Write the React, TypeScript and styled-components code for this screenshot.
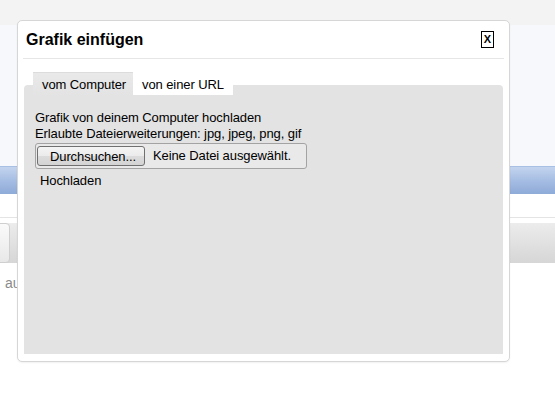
import React from 'react';
import styled, { createGlobalStyle } from 'styled-components';

const GlobalStyle = createGlobalStyle`
	html, body {
		margin: 0;
		padding: 0;
		background: #fff;
		font-family: 'Liberation Sans', Arial, sans-serif;
		font-size: 13px;
		color: #000;
	}
`;

const Page = styled.div`
	position: relative;
	width: 555px;
	height: 401px;
	overflow: hidden;
	background: #fff;
`;

const TopBand = styled.div`
	height: 25px;
	background: #f3f3f3;
`;

const Hero = styled.div`
	height: 141px;
	background: #f7f8fc;
`;

const BlueBar = styled.div`
	height: 28px;
	background: linear-gradient(#c3d4ee, #a3bbe2 55%, #8eaad8);
	border-top: 1px solid #a9bfe3;
	box-sizing: border-box;
`;

const Spacer = styled.div`
	height: 23px;
	border-bottom: 1px solid #e4e4e4;
`;

const Toolbar = styled.div`
	margin-top: 5px;
	height: 40px;
	display: flex;
	align-items: center;
	background: linear-gradient(#ececec, #d6d6d6);
`;

const ToolButton = styled.div`
	width: 30px;
	height: 38px;
	margin-left: -22px;
	border: 1px solid #cfcfcf;
	border-radius: 4px;
	background: linear-gradient(#fafafa, #e8e8e8);
`;

const FaintText = styled.div`
	padding: 12px 0 0 5px;
	color: #8a8a8a;
	font-size: 14px;
`;

const Dialog = styled.div`
	position: absolute;
	top: 20px;
	left: 17px;
	width: 493px;
	height: 342px;
	box-sizing: border-box;
	display: flex;
	flex-direction: column;
	padding: 0 6px 7px;
	background: #fff;
	border: 1px solid #d6d6d6;
	border-radius: 5px;
	box-shadow: 0 1px 2px rgba(0, 0, 0, 0.06);
`;

const Header = styled.div`
	height: 37px;
	display: flex;
	align-items: center;
	justify-content: space-between;
	padding: 0 10px 0 3px;
	margin: 0 -1px;
	border-bottom: 1px solid #e6e6e6;
`;

const Title = styled.h1`
	margin: 0;
	font-size: 16px;
	font-weight: bold;
	color: #000;
`;

const CloseButton = styled.button`
	width: 13px;
	height: 17px;
	padding: 0;
	border: 1px solid #000;
	background: #fff;
	font-family: 'Liberation Sans', Arial, sans-serif;
	font-size: 11px;
	font-weight: bold;
	line-height: 15px;
	color: #000;
	cursor: pointer;
`;

const TabsBox = styled.div`
	flex: 1;
	margin-top: 26px;
	background: #e3e3e3;
	border-radius: 4px 4px 0 0;
	display: flex;
	flex-direction: column;
`;

const TabList = styled.div`
	display: flex;
	margin: -13px 0 0 9px;
	height: 24px;
`;

const Tab = styled.div<{ $active?: boolean }>`
	height: ${(p) => (p.$active ? 24 : 23)}px;
	padding: 0 ${(p) => (p.$active ? 7 : 9)}px 0 9px;
	display: flex;
	align-items: center;
	background: ${(p) => (p.$active ? 'linear-gradient(#e9e9e9, #e3e3e3)' : '#fff')};
	border-top: 1px solid ${(p) => (p.$active ? '#dcdcdc' : '#fff')};
	box-sizing: border-box;
	color: #000;
	letter-spacing: -0.1px;
	cursor: pointer;
`;

const Panel = styled.div`
	padding: 14px 11px 0;
	line-height: 16px;
	letter-spacing: -0.1px;
`;

const Line = styled.div``;

const FileBox = styled.div`
	display: inline-flex;
	align-items: center;
	width: 272px;
	height: 26px;
	margin-top: 1px;
	box-sizing: border-box;
	padding: 0 2px 0 1px;
	border: 1px solid #a3a3a3;
	border-radius: 3px;
	background: #e9e9e9;
`;

const BrowseButton = styled.button`
	width: 108px;
	height: 20px;
	padding: 0 0 0 4px;
	box-sizing: border-box;
	border: 1px solid #707070;
	border-radius: 3px;
	background: linear-gradient(#f4f4f4, #ebebeb 50%, #dcdcdc 51%, #d4d4d4);
	font-family: 'Liberation Sans', Arial, sans-serif;
	font-size: 13px;
	letter-spacing: -0.1px;
	color: #000;
`;

const FileName = styled.span`
	margin-left: 8px;
`;

const UploadLink = styled.div`
	margin: 4px 0 0 5px;
	cursor: pointer;
`;

export default function App() {
	const [tab, setTab] = React.useState(0);

	return (
		<Page>
			<GlobalStyle />
			<TopBand />
			<Hero />
			<BlueBar />
			<Spacer />
			<Toolbar>
				<ToolButton />
			</Toolbar>
			<FaintText>au</FaintText>

			<Dialog>
				<Header>
					<Title>Grafik einfügen</Title>
					<CloseButton>X</CloseButton>
				</Header>
				<TabsBox>
					<TabList>
						<Tab $active={tab === 0} onClick={() => setTab(0)}>
							vom Computer
						</Tab>
						<Tab $active={tab === 1} onClick={() => setTab(1)}>
							von einer URL
						</Tab>
					</TabList>
					<Panel>
						<Line>Grafik von deinem Computer hochladen</Line>
						<Line>Erlaubte Dateierweiterungen: jpg, jpeg, png, gif</Line>
						<FileBox>
							<BrowseButton>Durchsuchen...</BrowseButton>
							<FileName>Keine Datei ausgewählt.</FileName>
						</FileBox>
						<UploadLink>Hochladen</UploadLink>
					</Panel>
				</TabsBox>
			</Dialog>
		</Page>
	);
}
